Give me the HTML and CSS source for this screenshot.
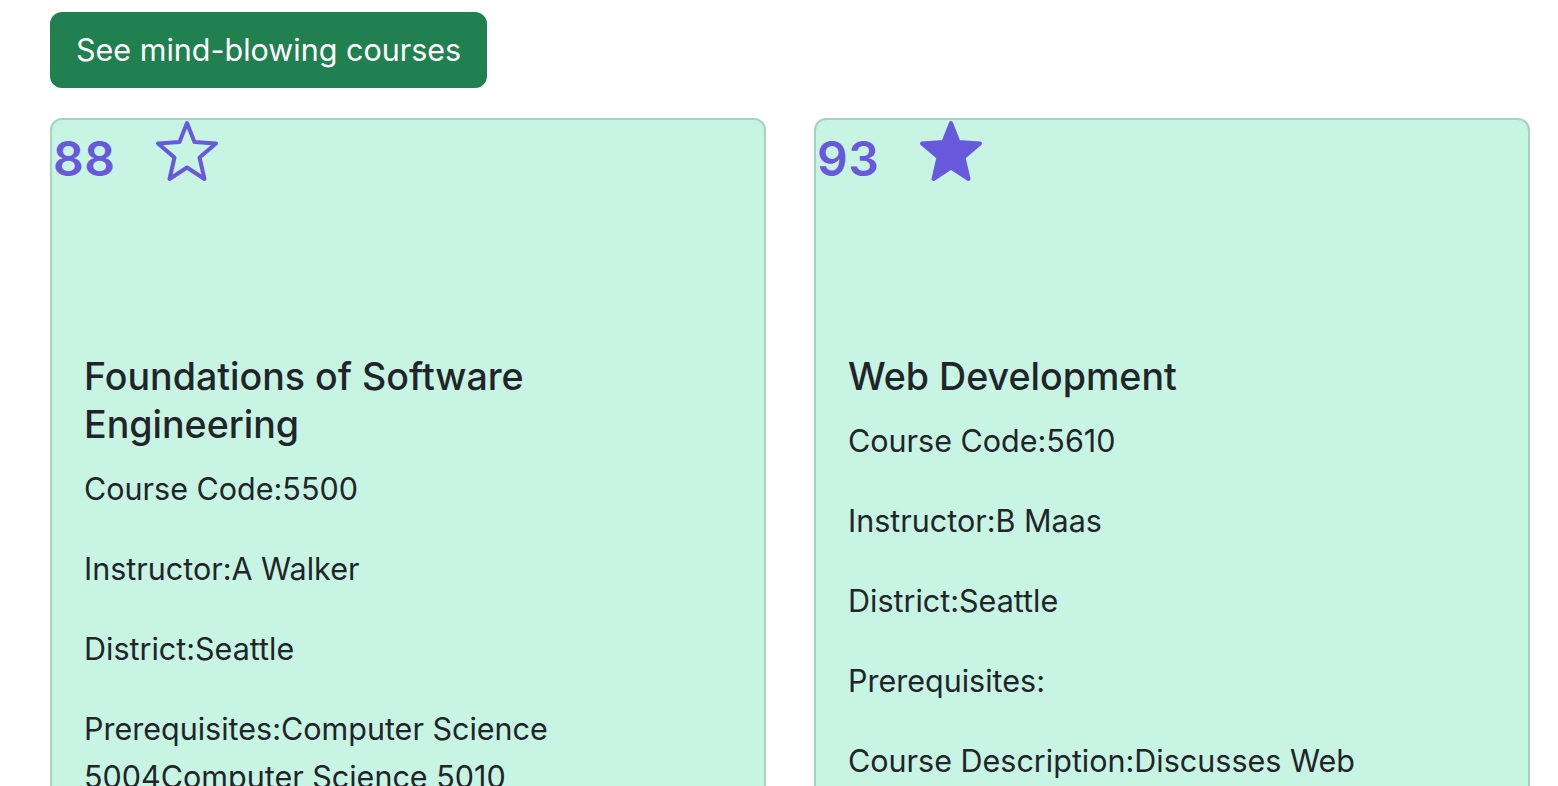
FILE: index.html
```html
<!DOCTYPE html>
<html lang="en">
<head>
<meta charset="utf-8">
<title>Courses</title>
<link rel="stylesheet" href="styles.css">
</head>
<body>
<div class="page">
  <button class="btn-success">See mind-blowing courses</button>
  <div class="cards">
    <div class="card">
      <div class="card-top">
        <span class="score">88</span>
        <svg class="star" viewBox="0 0 64 64" width="64" height="64" aria-hidden="true">
          <polygon points="32,3 39.5,22 61,23.5 44.5,37.5 49.5,59 32,47.5 14.5,59 19.5,37.5 3,23.5 24.5,22" fill="none" stroke="#6858dc" stroke-width="4" stroke-linejoin="round"/>
        </svg>
      </div>
      <div class="card-body">
        <h5 class="card-title">Foundations of Software Engineering</h5>
        <p>Course Code:5500</p>
        <p>Instructor:A Walker</p>
        <p>District:Seattle</p>
        <p>Prerequisites:Computer Science 5004Computer Science 5010</p>
        <p>Course Description:Covers the foundations of software engineering.</p>
      </div>
    </div>
    <div class="card">
      <div class="card-top">
        <span class="score">93</span>
        <svg class="star" viewBox="0 0 64 64" width="64" height="64" aria-hidden="true">
          <polygon points="32,3 39.5,22 61,23.5 44.5,37.5 49.5,59 32,47.5 14.5,59 19.5,37.5 3,23.5 24.5,22" fill="#6858dc" stroke="#6858dc" stroke-width="4" stroke-linejoin="round"/>
        </svg>
      </div>
      <div class="card-body">
        <h5 class="card-title">Web Development</h5>
        <p>Course Code:5610</p>
        <p>Instructor:B Maas</p>
        <p>District:Seattle</p>
        <p>Prerequisites:</p>
        <p>Course Description:Discusses Web development techniques and frameworks.</p>
      </div>
    </div>
  </div>
</div>
</body>
</html>
```

FILE: styles.css
```css
html, body {
  margin: 0;
  padding: 0;
  overflow: hidden;
  background: #ffffff;
}
body {
  font-family: Inter, "Noto Sans", "Liberation Sans", sans-serif;
  color: #212529;
}
.page {
  padding: 12px 28px 0 50px;
}
.btn-success {
  display: inline-block;
  font-family: inherit;
  font-size: 30.5px;
  line-height: 48px;
  padding: 12px 24px;
  border: 2px solid #20804f;
  border-radius: 12px;
  background: #20804f;
  color: #ffffff;
  cursor: pointer;
}
.cards {
  display: grid;
  grid-template-columns: 716px 716px;
  column-gap: 48px;
  margin-top: 30px;
  align-items: start;
}
.card {
  background: #c8f4e3;
  border: 2px solid #a6d3bf;
  border-radius: 12px;
  min-height: 900px;
}
.card-top {
  height: 201px;
  display: flex;
  align-items: flex-start;
  gap: 40px;
}
.score {
  font-size: 48px;
  font-weight: 600;
  line-height: 72px;
  padding-top: 3px;
  color: #6858dc;
  letter-spacing: 0.5px;
  padding-left: 1px;
}
.star {
  display: block;
  margin-top: 0;
}
.card-body {
  padding: 32px 32px 32px 32px;
}
.card-title {
  font-size: 37.6px;
  font-weight: 500;
  line-height: 48px;
  margin: 0 0 16px 0;
}
.card-body p {
  font-size: 30.5px;
  line-height: 48px;
  margin: 0 0 32px 0;
}
```
